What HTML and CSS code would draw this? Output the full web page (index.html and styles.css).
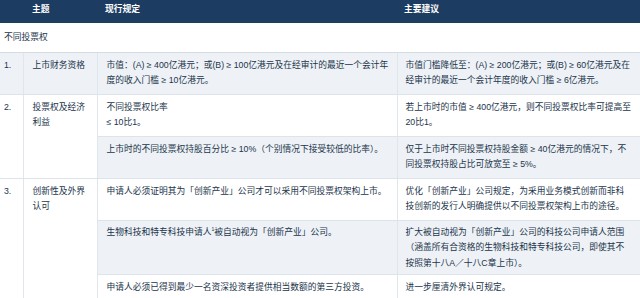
FILE: index.html
```html
<!DOCTYPE html>
<html lang="zh-CN">
<head>
<meta charset="utf-8">
<link rel="stylesheet" href="styles.css">
</head>
<body>
<table class="tbl">
  <colgroup>
    <col class="c-num"><col class="c-theme"><col class="c-rule"><col class="c-sugg">
  </colgroup>
  <thead>
    <tr class="head">
      <th></th><th class="th-theme">主题</th><th class="th-rule">现行规定</th><th class="th-sugg">主要建议</th>
    </tr>
  </thead>
  <tbody>
    <tr class="section"><td colspan="4"><span class="ln">不同投票权</span></td></tr>
    <tr class="alt">
      <td class="num"><span class="ln">1.</span></td>
      <td class="theme"><span class="ln">上市财务资格</span></td>
      <td class="rule"><span class="ln">市值：(A) ≥ 400亿港元；或(B) ≥ 100亿港元及在经审计的最近一个会计年</span><span class="ln">度的收入门槛 ≥ 10亿港元。</span></td>
      <td class="sugg"><span class="ln">市值门槛降低至：(A) ≥ 200亿港元；或(B) ≥ 60亿港元及在</span><span class="ln">经审计的最近一个会计年度的收入门槛 ≥ 6亿港元。</span></td>
    </tr>
    <tr>
      <td class="num" rowspan="2"><span class="ln">2.</span></td>
      <td class="theme" rowspan="2"><span class="ln">投票权及经济</span><span class="ln">利益</span></td>
      <td class="rule"><span class="ln">不同投票权比率</span><span class="ln">≤ 10比1。</span></td>
      <td class="sugg"><span class="ln">若上市时的市值 ≥ 400亿港元，则不同投票权比率可提高至</span><span class="ln">20比1。</span></td>
    </tr>
    <tr class="alt">
      <td class="rule"><span class="ln">上市时的不同投票权持股百分比 ≥ 10%（个别情况下接受较低的比率）。</span></td>
      <td class="sugg"><span class="ln">仅于上市时不同投票权持股金额 ≥ 40亿港元的情况下，不</span><span class="ln">同投票权持股占比可放宽至 ≥ 5%。</span></td>
    </tr>
    <tr>
      <td class="num" rowspan="3"><span class="ln">3.</span></td>
      <td class="theme" rowspan="3"><span class="ln">创新性及外界</span><span class="ln">认可</span></td>
      <td class="rule"><span class="ln">申请人必须证明其为「创新产业」公司才可以采用不同投票权架构上市。</span></td>
      <td class="sugg"><span class="ln">优化「创新产业」公司规定，为采用业务模式创新而非科</span><span class="ln">技创新的发行人明确提供以不同投票权架构上市的途径。</span></td>
    </tr>
    <tr class="alt tight">
      <td class="rule"><span class="ln">生物科技和特专科技申请人<sup class="fn">1</sup>被自动视为「创新产业」公司。</span></td>
      <td class="sugg"><span class="ln">扩大被自动视为「创新产业」公司的科技公司申请人范围</span><span class="ln">（涵盖所有合资格的生物科技和特专科技公司，即使其不</span><span class="ln">按照第十八A／十八C章上市）。</span></td>
    </tr>
    <tr>
      <td class="rule"><span class="ln">申请人必须已得到最少一名资深投资者提供相当数额的第三方投资。</span></td>
      <td class="sugg"><span class="ln">进一步厘清外界认可规定。</span></td>
    </tr>
  </tbody>
</table>
</body>
</html>
```
FILE: styles.css
```css
html, body {
  margin: 0;
  padding: 0;
  background: #ffffff;
}
body {
  font-family: "Liberation Sans", "Noto Sans CJK TC", sans-serif;
  font-size: 8.75px;
  line-height: 15.5px;
  color: #22344b;
  width: 640px;
  height: 298px;
  overflow: hidden;
}
.tbl {
  width: 640px;
  border-collapse: collapse;
  table-layout: fixed;
}
.c-num { width: 23px; }
.c-theme { width: 74px; }
.c-rule { width: 300px; }
.c-sugg { width: 243px; }

.head th {
  background: #1d3c61;
  color: #ffffff;
  font-weight: bold;
  text-align: left;
  height: 19px;
  padding: 0 0 4px 0;
  line-height: 15px;
  vertical-align: middle;
}
.th-theme { padding-left: 9px !important; }
.th-rule { padding-left: 8px !important; }
.th-sugg { padding-left: 7px !important; }

.ln {
  display: block;
  height: 15.5px;
  line-height: 15.5px;
}

td {
  vertical-align: top;
  padding: 5px 4px 5px 9px;
  border-bottom: 1px solid #dde3ea;
  white-space: nowrap;
}
.section td {
  padding: 7px 4px 6px 4px;
  border-bottom: 1px solid #d4dbe3;
}
.alt td { background: #eef2f6; }
.tight td { padding-top: 4px; padding-bottom: 3px; }
td.num {
  padding-left: 4px;
  border-right: 1px solid #e1e6ec;
}
td.theme {
  padding-left: 9px;
  border-right: 1px solid #e1e6ec;
}
td.rule {
  padding-left: 9px;
  border-right: 1px solid #e1e6ec;
}
td.sugg {
  padding-left: 8px;
}
.fn {
  font-size: 5px;
  line-height: 0;
  vertical-align: 4px;
}
```
